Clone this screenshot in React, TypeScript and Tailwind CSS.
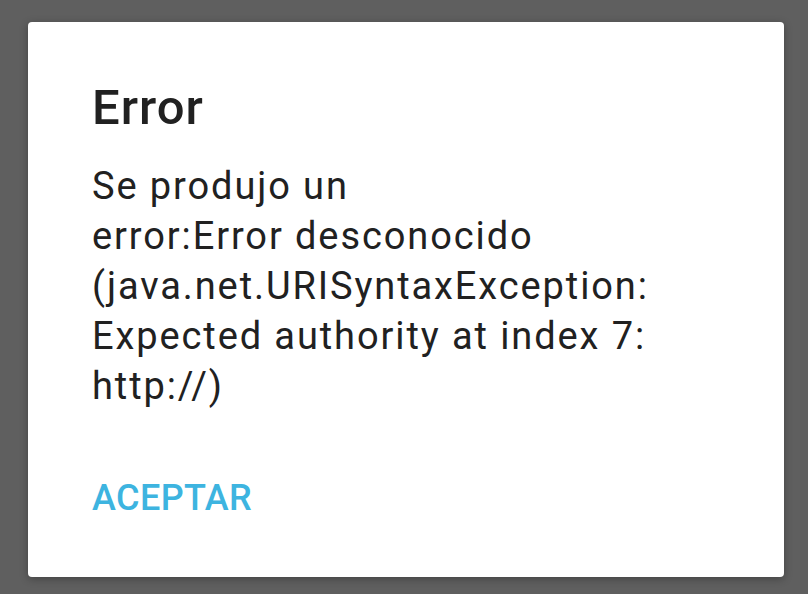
export default function App() {
  return (
    <div
      className="min-h-screen w-full bg-[#5f5f5f] pt-[22px] pl-[28px]"
      style={{ fontFamily: 'Roboto, "Noto Sans", sans-serif' }}
    >
      <div className="w-[756px] h-[555px] bg-white rounded-[4px] shadow-[0_2px_8px_rgba(0,0,0,0.3)] pl-[64px] pr-[40px] pt-[58px]">
        <h1 className="text-[49px] leading-[56px] font-medium text-[#212121] tracking-[1px]">Error</h1>
        <p className="mt-[25px] text-[38px] leading-[50px] text-[#212121] tracking-[1.9px]">
          Se produjo un
          <br />
          error:Error desconocido
          <br />
          (java.net.URISyntaxException:
          <br />
          Expected authority at index 7:
          <br />
          http://)
        </p>
        <button className="mt-[67px] block text-[36px] leading-[40px] font-medium text-[#3db4e0] tracking-[0.4px]">
          ACEPTAR
        </button>
      </div>
    </div>
  )
}
